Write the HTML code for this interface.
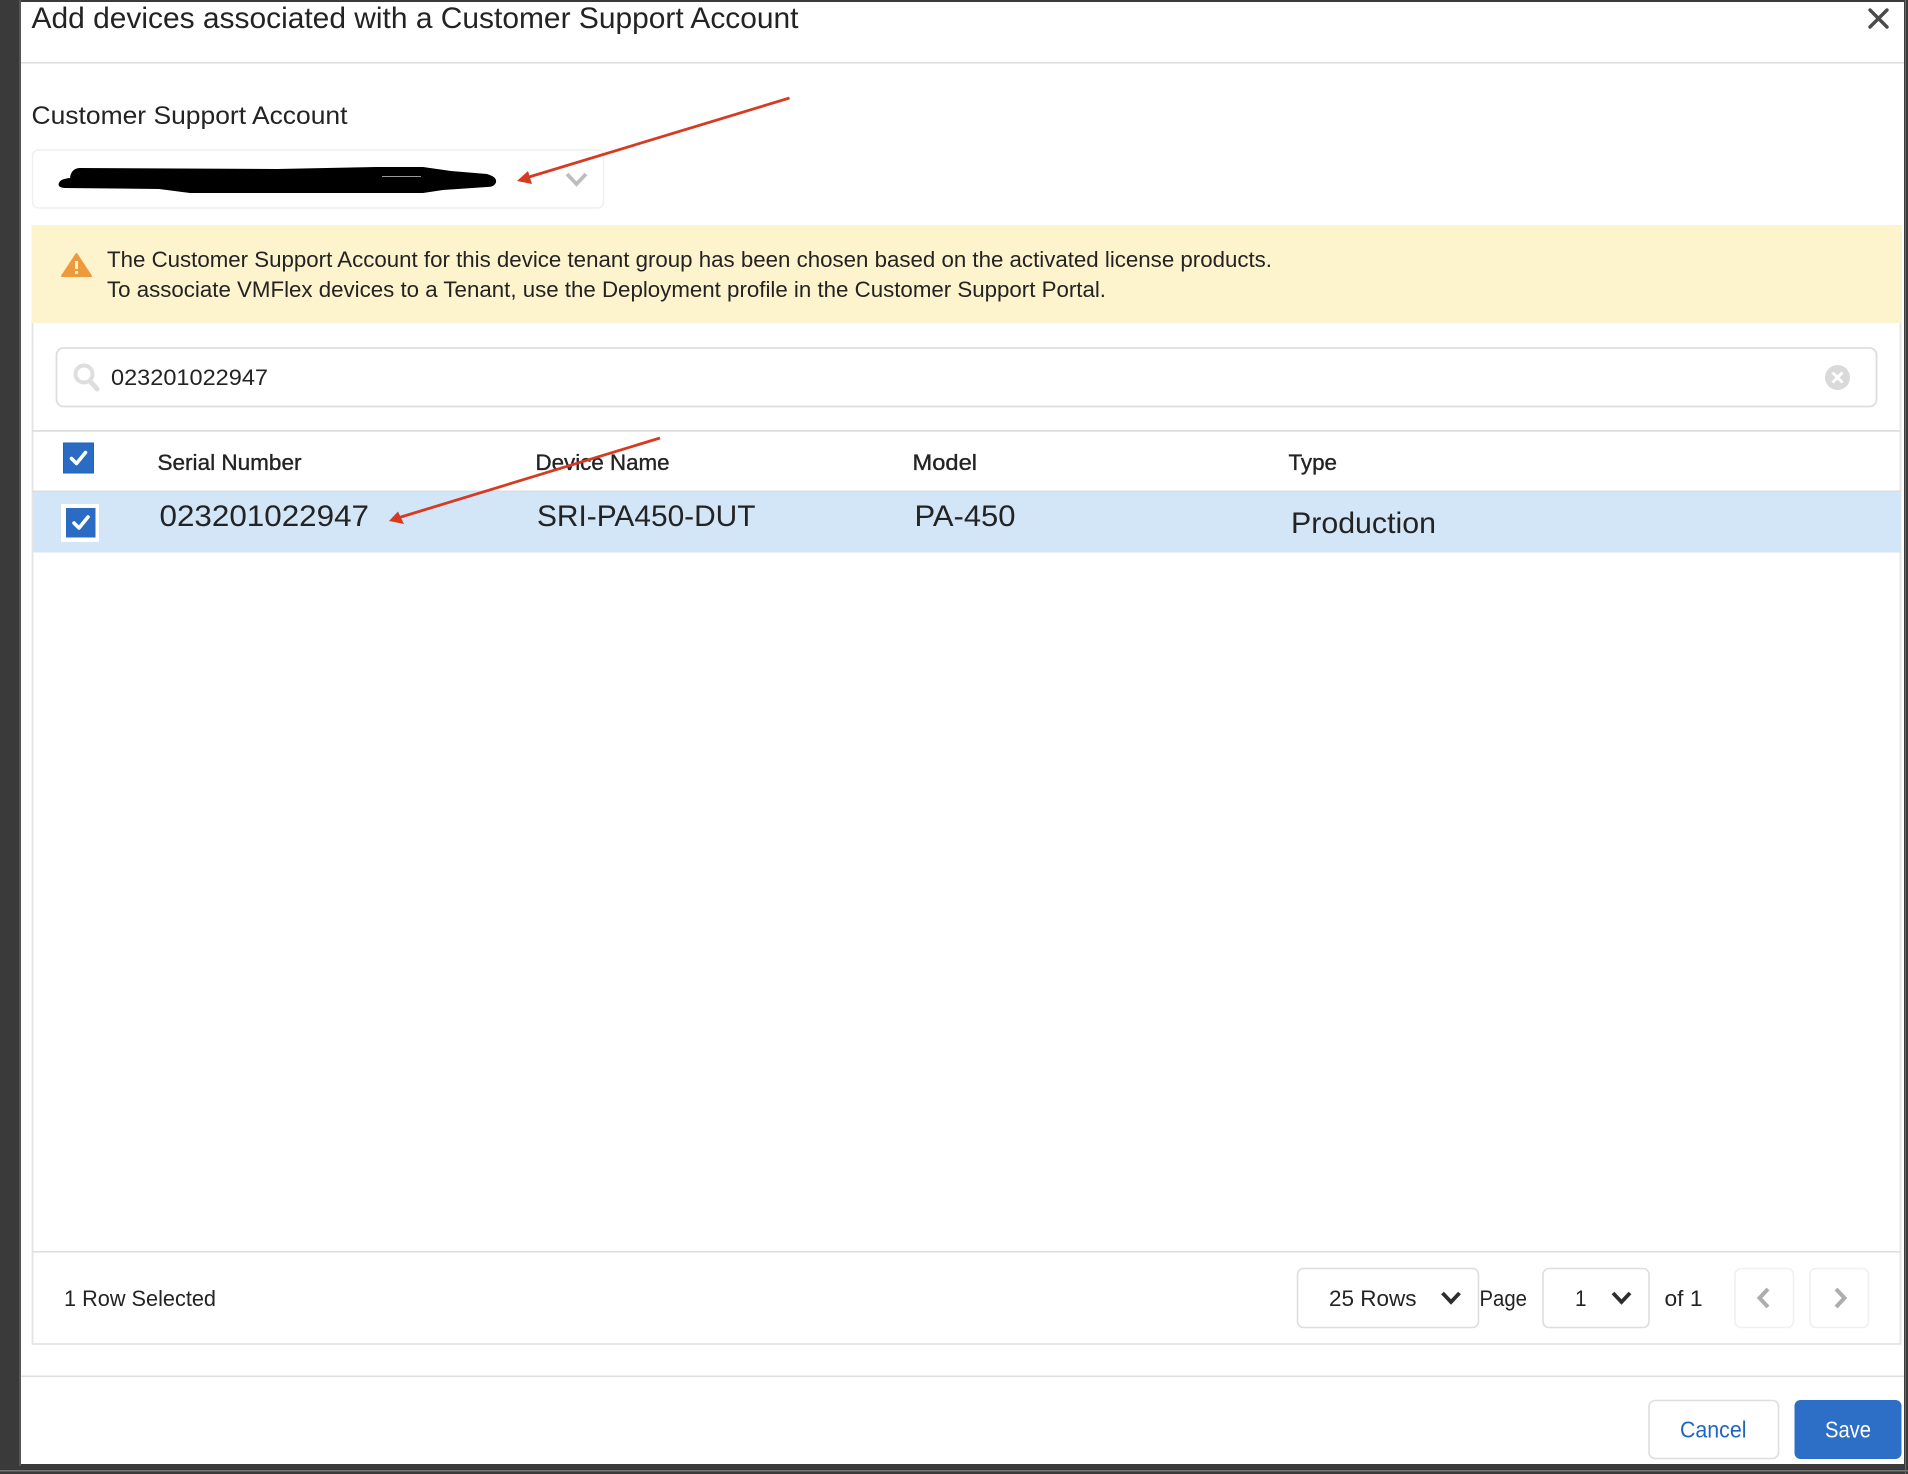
<!DOCTYPE html>
<html lang="en">
<head>
<meta charset="utf-8">
<title>Add devices associated with a Customer Support Account</title>
<style>
html,body{margin:0;padding:0;width:1908px;height:1474px;overflow:hidden;background:#3a3a3a}
svg{display:block;position:absolute;left:0;top:0}
text{font-family:"Liberation Sans",Arial,sans-serif;fill:#232323}
</style>
</head>
<body>
<svg width="1908" height="1474" viewBox="0 0 1908 1474" xmlns="http://www.w3.org/2000/svg">
  <!-- backdrop -->
  <rect x="0" y="0" width="1908" height="1474" fill="#3a3a3a"/>
  <rect x="19" y="0" width="2" height="1466" fill="#555"/>
  <rect x="0" y="1470" width="1908" height="1.5" fill="#777"/>
  <rect x="1905" y="0" width="1" height="1474" fill="#6a6a6a"/>
  <!-- dialog -->
  <rect x="21" y="2" width="1883" height="1462" fill="#fff"/>

  <!-- header -->
  <text x="31.5" y="28" font-size="29.500" textLength="767" lengthAdjust="spacingAndGlyphs">Add devices associated with a Customer Support Account</text>
  <path d="M1870 10 L1887 27 M1887 10 L1870 27" stroke="#4a4a4a" stroke-width="3.400" fill="none" stroke-linecap="round"/>
  <rect x="21" y="62" width="1883" height="1.600" fill="#dedede"/>

  <!-- account -->
  <text x="31.5" y="124" font-size="25" textLength="316" lengthAdjust="spacingAndGlyphs">Customer Support Account</text>
  <rect x="32.500" y="150" width="571" height="58" rx="6" fill="#fff" stroke="#efefef" stroke-width="1.400"/>
  <path d="M59 183 Q60 179 70 178 Q71 169 79 168 L277 169 L376 167 L423 167 L451 171 L487 174 Q497 177 496 182 Q495 187 487 187 L443 190 L423 193 L190 193 L159 189 L64 188 Q57 187 59 183 Z" fill="#000"/>
  <rect x="382" y="176" width="39" height="1" fill="#999"/>
  <path d="M567 174 L576.500 184 L586 174" stroke="#bdbdbd" stroke-width="3.800" fill="none"/>

  <!-- warning banner -->
  <rect x="31.500" y="225" width="1870.500" height="98" fill="#fdf3cd"/>
  <path d="M76.500 254 L91 276 L62 276 Z" fill="#ee9a3b" stroke="#ee9a3b" stroke-width="2" stroke-linejoin="round"/>
  <rect x="75" y="261" width="3" height="8" fill="#fdf3cd"/>
  <rect x="75" y="271" width="3" height="3" fill="#fdf3cd"/>
  <text x="107" y="267" font-size="22" textLength="1165" lengthAdjust="spacingAndGlyphs">The Customer Support Account for this device tenant group has been chosen based on the activated license products.</text>
  <text x="107" y="297" font-size="22" textLength="999" lengthAdjust="spacingAndGlyphs">To associate VMFlex devices to a Tenant, use the Deployment profile in the Customer Support Portal.</text>

  <!-- table frame -->
  <path d="M32.500 323 V1344 H1900.500 V323" fill="none" stroke="#e4e4e4" stroke-width="1.800"/>

  <!-- search -->
  <rect x="56.500" y="348" width="1820" height="58.500" rx="7" fill="#fff" stroke="#dedede" stroke-width="1.800"/>
  <circle cx="84" cy="374" r="8.500" fill="none" stroke="#dedede" stroke-width="4"/>
  <path d="M90 381 L97 389" stroke="#dedede" stroke-width="5" stroke-linecap="round"/>
  <text x="111" y="385" font-size="22" textLength="157" lengthAdjust="spacingAndGlyphs">023201022947</text>
  <circle cx="1837.500" cy="377.500" r="12.500" fill="#d9d9d9"/>
  <path d="M1832.500 372.500 L1842.500 382.500 M1842.500 372.500 L1832.500 382.500" stroke="#fff" stroke-width="3"/>

  <!-- table header -->
  <rect x="32" y="430" width="1869" height="1.800" fill="#e0e0e0"/>
  <rect x="63.500" y="443" width="30" height="30" fill="#2a6cc4" stroke="#1f5fc0" stroke-width="1"/>
  <path d="M71.500 458.500 L76.500 463.500 L85.500 452.500" stroke="#fff" stroke-width="3.600" fill="none" stroke-linecap="round" stroke-linejoin="round"/>
  <g stroke="#232323" stroke-width=".35">
    <text x="157.500" y="470" font-size="22" textLength="144" lengthAdjust="spacingAndGlyphs">Serial Number</text>
    <text x="535.500" y="470" font-size="22" textLength="134" lengthAdjust="spacingAndGlyphs">Device Name</text>
    <text x="912.500" y="470" font-size="22" textLength="64.500" lengthAdjust="spacingAndGlyphs">Model</text>
    <text x="1288.500" y="470" font-size="22" textLength="48.500" lengthAdjust="spacingAndGlyphs">Type</text>
  </g>
  <rect x="32" y="490.500" width="1869" height="1.600" fill="#dcdcdc"/>

  <!-- selected row -->
  <rect x="33" y="492" width="1868" height="60.500" fill="#d3e6f8"/>
  <rect x="61" y="504" width="38" height="38" fill="#fff"/>
  <rect x="66" y="508" width="29.500" height="29.500" fill="#2a6cc4"/>
  <path d="M74 523 L79 528 L88 517" stroke="#fff" stroke-width="3.600" fill="none" stroke-linecap="round" stroke-linejoin="round"/>
  <text x="159.500" y="526" font-size="30" textLength="209.500" lengthAdjust="spacingAndGlyphs">023201022947</text>
  <text x="537" y="526" font-size="30" textLength="218.500" lengthAdjust="spacingAndGlyphs">SRI-PA450-DUT</text>
  <text x="914.500" y="526" font-size="30" textLength="101" lengthAdjust="spacingAndGlyphs">PA-450</text>
  <text x="1291" y="533" font-size="30" textLength="145" lengthAdjust="spacingAndGlyphs">Production</text>

  <!-- table footer -->
  <rect x="32" y="1251" width="1869" height="1.600" fill="#e0e0e0"/>
  <text x="64" y="1306" font-size="22.500" textLength="152" lengthAdjust="spacingAndGlyphs">1 Row Selected</text>

  <rect x="1297.500" y="1268.500" width="181" height="59" rx="6" fill="#fff" stroke="#dedede" stroke-width="1.600"/>
  <text x="1329" y="1306" font-size="22.500" textLength="87.500" lengthAdjust="spacingAndGlyphs">25 Rows</text>
  <path d="M1442.500 1293 L1451 1302 L1459.500 1293" stroke="#2d2d2d" stroke-width="3.800" fill="none"/>
  <text x="1479.500" y="1306" font-size="22.500" textLength="47.500" lengthAdjust="spacingAndGlyphs">Page</text>
  <rect x="1543" y="1268.500" width="106" height="59" rx="6" fill="#fff" stroke="#dedede" stroke-width="1.600"/>
  <text x="1575" y="1306" font-size="22.500" textLength="11.500" lengthAdjust="spacingAndGlyphs">1</text>
  <path d="M1613 1293 L1621.500 1302 L1630 1293" stroke="#2d2d2d" stroke-width="3.800" fill="none"/>
  <text x="1664.500" y="1306" font-size="22.500" textLength="38" lengthAdjust="spacingAndGlyphs">of 1</text>

  <rect x="1735" y="1268.500" width="58.500" height="59" rx="6" fill="#fff" stroke="#f0f0f0" stroke-width="1.600"/>
  <path d="M1768 1289 L1759.500 1298 L1768 1307" stroke="#adadad" stroke-width="4" fill="none"/>
  <rect x="1810" y="1268.500" width="58.500" height="59" rx="6" fill="#fff" stroke="#f0f0f0" stroke-width="1.600"/>
  <path d="M1836 1289 L1844.500 1298 L1836 1307" stroke="#adadad" stroke-width="4" fill="none"/>

  <!-- dialog footer -->
  <rect x="21" y="1375.500" width="1883" height="1.600" fill="#e0e0e0"/>
  <rect x="1649" y="1400.500" width="129.500" height="58" rx="6" fill="#fff" stroke="#dedede" stroke-width="1.600"/>
  <text x="1680" y="1437.500" font-size="23" textLength="66.500" lengthAdjust="spacingAndGlyphs" style="fill:#1f66c1">Cancel</text>
  <rect x="1794.500" y="1400" width="107" height="59" rx="6" fill="#2d6fc6"/>
  <text x="1825" y="1437.500" font-size="23" textLength="46" lengthAdjust="spacingAndGlyphs" style="fill:#fff">Save</text>

  <!-- annotation arrows -->
  <path d="M789.500 98 L524 178.500" stroke="#d63b22" stroke-width="2.800" fill="none"/>
  <path d="M517 181 L528 171 L532 184 Z" fill="#d63b22"/>
  <path d="M660 438 L396 518.500" stroke="#d63b22" stroke-width="2.800" fill="none"/>
  <path d="M389 521 L398 511.500 L404 524 Z" fill="#d63b22"/>
</svg>
</body>
</html>
